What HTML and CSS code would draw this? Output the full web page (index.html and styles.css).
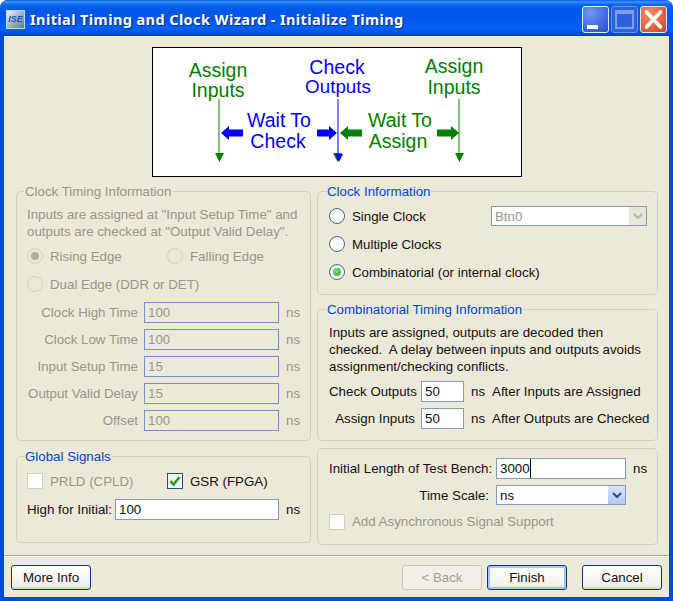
FILE: index.html
```html
<!DOCTYPE html>
<html lang="en">
<head>
<meta charset="utf-8">
<title>Initial Timing and Clock Wizard - Initialize Timing</title>
<link rel="stylesheet" href="styles.css">
</head>
<body>
<div class="window">
  <header class="titlebar">
    <div class="app-icon"><span>ISE</span></div>
    <div class="title">Initial Timing and Clock Wizard - Initialize Timing</div>
    <div class="winbtns">
      <div class="winbtn"><svg viewBox="0 0 27 27" width="27" height="27"><rect x="5" y="19" width="11" height="4" fill="#fff"/></svg></div>
      <div class="winbtn off"><svg viewBox="0 0 27 27" width="27" height="27"><rect x="5" y="5" width="17" height="17" fill="none" stroke="#7d9cec" stroke-width="2"/><rect x="5" y="4" width="17" height="4" fill="#7d9cec"/></svg></div>
      <div class="winbtn close"><svg viewBox="0 0 27 27" width="27" height="27"><path d="M6.500 6 20.500 21M20.500 6 6.500 21" stroke="#fff" stroke-width="3.600" stroke-linecap="round"/></svg></div>
    </div>
  </header>
  <main class="client">
    <div class="diagram">
      <svg viewBox="0 0 368 128" width="368" height="128">
        <g class="dg">
          <text x="65" y="29">Assign</text><text x="65" y="49">Inputs</text>
          <path d="M66 51V107" stroke="#008000" fill="none"/><path d="M62 105h9l-4.500 9z"/>
          <text x="301" y="25">Assign</text><text x="301" y="46">Inputs</text>
          <path d="M306 51V107" stroke="#008000" fill="none"/><path d="M302 105h9l-4.500 9z"/>
          <text x="247" y="79">Wait To</text><text x="245" y="100">Assign</text>
          <path d="M187 85l8 -7v3.500h14v7h-14v3.500z"/>
          <path d="M306 85l-8 -7v3.500h-14v7h14v3.500z"/>
          <path d="M180 105h9l-4.500 9z"/>
        </g>
        <g class="db">
          <text x="184" y="26">Check</text><text class="narrow" x="185" y="45">Outputs</text>
          <path d="M185 51V107" stroke="#0000ff" fill="none"/><path d="M182 106h8l-4 8z"/>
          <text x="126" y="79">Wait To</text><text x="125" y="100">Check</text>
          <path d="M68 85l8 -7v3.500h14v7h-14v3.500z"/>
          <path d="M184 85l-8 -7v3.500h-12v7h12v3.500z"/>
        </g>
      </svg>
    </div>
    <div class="columns">
      <div class="col">
        <fieldset class="group disabled timing">
          <legend>Clock Timing Information</legend>
          <p class="para">Inputs are assigned at "Input Setup Time" and<br>outputs are checked at "Output Valid Delay".</p>
          <div class="optrow two"><label class="opt"><i class="radio dis on"></i>Rising Edge</label><label class="opt"><i class="radio dis"></i>Falling Edge</label></div>
          <div class="optrow"><label class="opt"><i class="radio dis"></i>Dual Edge (DDR or DET)</label></div>
          <div class="rows">
            <div class="row"><span class="lab l1">Clock High Time</span><div class="field f-wide ro">100</div><span class="unit">ns</span></div>
            <div class="row"><span class="lab l1">Clock Low Time</span><div class="field f-wide ro">100</div><span class="unit">ns</span></div>
            <div class="row"><span class="lab l1">Input Setup Time</span><div class="field f-wide ro">15</div><span class="unit">ns</span></div>
            <div class="row"><span class="lab l1">Output Valid Delay</span><div class="field f-wide ro">15</div><span class="unit">ns</span></div>
            <div class="row"><span class="lab l1">Offset</span><div class="field f-wide ro">100</div><span class="unit">ns</span></div>
          </div>
        </fieldset>
        <fieldset class="group global">
          <legend>Global Signals</legend>
          <div class="optrow two"><label class="opt dim"><i class="check"></i>PRLD (CPLD)</label><label class="opt"><i class="check on"><svg viewBox="0 0 14 14" width="14" height="14"><path d="M2.500 7l3 3.500 6-7.500" fill="none" stroke="#21a121" stroke-width="2.600"/></svg></i>GSR (FPGA)</label></div>
          <div class="row initial"><span class="lab">High for Initial:</span><div class="field f-init">100</div><span class="unit">ns</span></div>
        </fieldset>
      </div>
      <div class="col">
        <fieldset class="group rgroup clockinfo">
          <legend>Clock Information</legend>
          <div class="radiorow split"><label class="opt"><i class="radio"></i>Single Clock</label><div class="field select sel-dis ro-sel">Btn0<b class="arrow dis"><svg viewBox="0 0 16 18" width="16" height="18"><path d="M4 7l4 4 4-4" fill="none" stroke="#b5b5a8" stroke-width="2"/></svg></b></div></div>
          <div class="radiorow"><label class="opt"><i class="radio"></i>Multiple Clocks</label></div>
          <div class="radiorow"><label class="opt"><i class="radio on"></i>Combinatorial (or internal clock)</label></div>
        </fieldset>
        <fieldset class="group rgroup comb">
          <legend>Combinatorial Timing Information</legend>
          <p class="para">Inputs are assigned, outputs are decoded then<br>checked.&nbsp; A delay between inputs and outputs avoids<br>assignment/checking conflicts.</p>
          <div class="rows comb-rows">
            <div class="row"><span class="lab l2">Check Outputs</span><div class="field f-small">50</div><span class="unit">ns</span><span class="after">After Inputs are Assigned</span></div>
            <div class="row"><span class="lab l2">Assign Inputs</span><div class="field f-small">50</div><span class="unit">ns</span><span class="after">After Outputs are Checked</span></div>
          </div>
        </fieldset>
        <section class="group plain">
          <div class="row"><span class="lab l3">Initial Length of Test Bench:</span><div class="field f-len"><span class="caret">3000</span></div><span class="unit">ns</span></div>
          <div class="row sc"><span class="lab l3">Time Scale:</span><div class="field select f-len">ns<b class="arrow"><svg viewBox="0 0 16 18" width="16" height="18"><path d="M4 7l4 4 4-4" fill="none" stroke="#2a4d9a" stroke-width="2"/></svg></b></div></div>
          <label class="opt dim async"><i class="check"></i>Add Asynchronous Signal Support</label>
        </section>
      </div>
    </div>
    <footer class="footer">
      <div class="btn">More Info</div>
      <div class="btn-right">
        <div class="btn off">&lt; Back</div>
        <div class="btn default">Finish</div>
        <div class="btn cancel">Cancel</div>
      </div>
    </footer>
  </main>
</div>
</body>
</html>
```
FILE: styles.css
```css
* { box-sizing: border-box; }
html, body { margin: 0; padding: 0; }
body { width: 673px; height: 601px; overflow: hidden; font: 13.3px/17px "Liberation Sans", Arial, sans-serif; color: #111; }
.window { width: 673px; height: 601px; display: flex; flex-direction: column; background: #0049dc; border-radius: 8px 8px 0 0; }
.titlebar { height: 36px; flex: none; display: flex; align-items: center; padding: 3px 6px 0 6px; border-radius: 8px 8px 0 0;
  background: linear-gradient(#0a5fe6 0, #3a93fb 2px, #0f6cf0 4px, #0058e6 9px, #0058ee 20px, #0062f8 28px, #0052e0 33px, #0040c0 36px); }
.app-icon { width: 19px; height: 19px; background: linear-gradient(135deg, #eef2f6, #9cb4c8 50%, #5d7f98); border: 1px solid #c8d4e0; display: flex; align-items: center; justify-content: center; }
.app-icon span { font: italic bold 9px/1 "Liberation Sans", sans-serif; color: #1a55b0; }
.title { margin-left: 5px; flex: 1; color: #fff; font: bold 14.5px/1 "Noto Sans", sans-serif; letter-spacing: .41px; text-shadow: 1px 1px 1px #0a2d88; }
.winbtns { display: flex; gap: 2px; }
.winbtn { width: 27px; height: 27px; border: 1px solid #dfe8ff; border-radius: 3px; background: radial-gradient(circle at 30% 25%, #6f97ee, #3a63dc 70%, #2a4fc8); overflow: hidden; }
.winbtn svg { display: block; margin: -1px; }
.winbtn.off { border-color: #6c8fe8; background: #2e5fdc; }
.winbtn.close { background: radial-gradient(circle at 35% 30%, #ee9070, #dc5a34 70%, #c8421e); }
.client { flex: 1; margin: 0 4px 4px; background: #ece9d8; display: flex; flex-direction: column; }
.diagram { width: 370px; height: 130px; margin: 11px 0 0 148px; border: 1px solid #000; background: #fff; flex: none; }
.diagram svg { display: block; }
.dg text, .db text { font: 19.5px "Liberation Sans", Arial, sans-serif; text-anchor: middle; }
.db text.narrow { font-size: 18.8px; }
.dg { fill: #008000; }
.db { fill: #0000ff; }
.columns { display: grid; grid-template-columns: 295px 341px; column-gap: 6px; margin: 6px 0 0 12px; }
.col { display: flex; flex-direction: column; }
.group { margin: 0; padding: 0 10px; border: 1px solid #d3d0bf; border-radius: 5px; min-width: 0; }
.group legend { padding: 0 1px; margin-left: -3px; color: #0046d5; line-height: 17px; }
.rgroup { padding-left: 11px; }
.disabled legend { color: #98978b; }
.timing { height: 258px; }
.global { height: 95px; margin-top: 7px; }
.clockinfo { height: 112px; }
.comb { height: 140px; margin-top: 6px; }
.plain { height: 97px; margin-top: 7px; padding: 9px 11px 0; }
.para { margin: 6px 0 0; white-space: nowrap; }
.disabled .para, .disabled .opt, .disabled .lab, .disabled .unit, .ro { color: #98978b; }
.dim { color: #98978b; }
.optrow { display: flex; height: 28px; align-items: center; }
.timing .optrow.two { margin-top: 2px; }
.global .optrow.two { margin-top: 2px; }
.two .opt:first-child { width: 140px; }
.opt { display: flex; align-items: center; gap: 7px; white-space: nowrap; }
.radio { width: 16px; height: 16px; border-radius: 50%; border: 1px solid #3f6a90; background: radial-gradient(circle at 60% 60%, #fff 40%, #e4e2d8); display: flex; align-items: center; justify-content: center; flex: none; }
.radio.on::after { content: ""; width: 8px; height: 8px; border-radius: 50%; background: radial-gradient(circle at 40% 35%, #7fe07f, #22a822); }
.radio.dis { border-color: #d3d0bf; background: #ece9d8; }
.radio.dis.on::after { background: #b0aea2; }
.check { width: 16px; height: 16px; border: 1px solid #d3d0bf; background: #fff; display: flex; align-items: center; justify-content: center; flex: none; }
.check.on { border-color: #1f4f7f; background: #f4f3ec; }
.rows { display: flex; flex-direction: column; gap: 6px; }
.timing .rows { margin-top: 4px; }
.row { display: flex; align-items: center; height: 21px; }
.lab { white-space: nowrap; flex: none; }
.l1 { width: 111px; text-align: right; margin-right: 6px; }
.l2 { width: 86px; text-align: right; margin-right: 6px; }
.l3 { width: 160px; text-align: right; margin-right: 7px; }
.field { height: 21px; border: 1px solid #7f9db9; background: #fff; padding: 0 3px; line-height: 19px; flex: none; }
.ro { background: #ece9d8; border-color: #7092c8; }
.f-wide { width: 135px; }
.f-init { width: 164px; }
.f-small { width: 43px; }
.f-len { width: 130px; }
.unit { margin-left: 7px; flex: none; }
.after { margin-left: 7px; white-space: nowrap; flex: none; }
.initial { margin-top: 4px; }
.initial .lab { width: 88px; }
.radiorow { height: 28px; display: flex; align-items: center; }
.clockinfo .radiorow:first-of-type { margin-top: 2px; }
.split { justify-content: space-between; }
.select { display: flex; justify-content: space-between; align-items: center; padding-right: 0; }
.sel-dis { width: 156px; height: 20px; color: #98978b; background: #fff; }
.arrow { width: 17px; height: 100%; background: linear-gradient(#d8e4fb, #b4c8f0); display: flex; align-items: center; justify-content: center; }
.arrow.dis { background: #e8e6da; }
.arrow svg { display: block; }
.comb .para { margin-top: 6px; }
.comb-rows { margin-top: 6px; }
.sc { margin-top: 6px; height: 20px; }
.sc .field { height: 20px; }
.caret { border-right: 1px solid #000; display: inline-block; }
.async { margin-top: 8px; }
.footer { margin-top: 10px; padding: 9px 7px 0; border-top: 1px solid #aca899; box-shadow: inset 0 1px 0 #fff; display: flex; justify-content: space-between; }
.btn-right { display: flex; gap: 5px; }
.btn { width: 80px; height: 25px; border: 1px solid #003c74; border-radius: 3px; background: linear-gradient(#fff, #f2f1e9 85%, #d6d0c5); text-align: center; line-height: 23px; }
.btn.off { border-color: #c9c7ba; background: #f2f0e6; color: #a09f93; }
.btn.default { box-shadow: inset 0 0 0 2px #a9c4f0; }
.btn.cancel { margin-left: 10px; }
```
